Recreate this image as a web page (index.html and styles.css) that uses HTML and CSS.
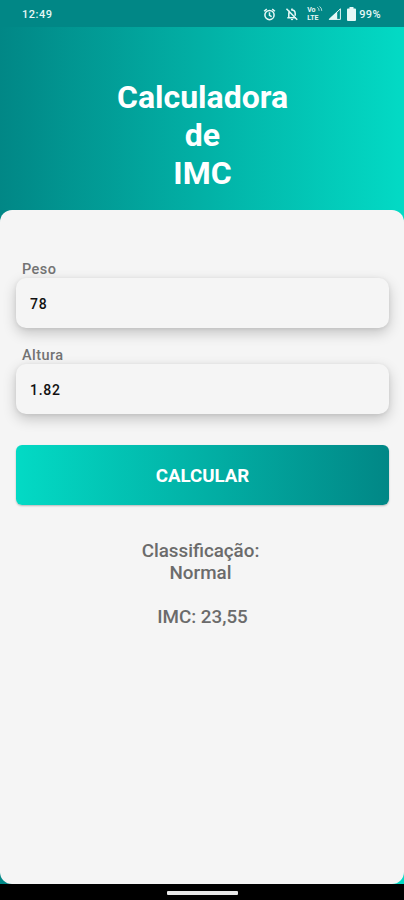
FILE: index.html
```html
<!DOCTYPE html>
<html lang="pt-BR">
<head>
<meta charset="UTF-8" />
<meta name="viewport" content="width=device-width, initial-scale=1" />
<title>Calculadora de IMC</title>
<link rel="stylesheet" href="styles.css">
</head>
<body>

<!-- Barra de status -->
<div class="status-bar">
  <span class="time">12:49</span>
  <div class="status-icons">
    <svg class="alarm" viewBox="0 0 24 24" fill="none" stroke="currentColor" stroke-width="2.8">
      <circle cx="12" cy="13" r="8.5" />
      <path d="M12 8v5.5l4 2.3M2 6l5-4M22 6l-5-4" />
    </svg>
    <svg class="bell" viewBox="0 0 24 24" fill="none" stroke="currentColor" stroke-width="2.6">
      <path d="M4 18.5h15M6.5 18v-7c0-2 .6-3.3 1.8-4.3M10.5 5.3c4-1 7 1.7 7 5.7v4M12 2.5v2.5M2.5 3l18.5 19" />
      <path d="M10 20.5h4a2 2 0 0 1-4 0z" fill="currentColor" stroke="none" />
    </svg>
    <div class="volte">
      <span>Vo<svg viewBox="0 0 8 8" fill="none" stroke="currentColor"><path d="M1 1.5q2.5 1.5 2.5 5M4 .5q3 2 3 6" /></svg></span>
      <span>LTE</span>
    </div>
    <svg class="signal" viewBox="0 0 13 12">
      <path d="M12.4 .8V11.4H1.2z" fill="none" stroke="currentColor" />
      <path d="M9.2 3.5V11.5H.5z" fill="currentColor" />
    </svg>
    <svg class="battery" viewBox="0 0 9 14" fill="currentColor">
      <path d="M2.5 0h4v1.5H8a1 1 0 0 1 1 1V13a1 1 0 0 1-1 1H1a1 1 0 0 1-1-1V2.5a1 1 0 0 1 1-1h1.5z" />
    </svg>
    <span class="percent">99%</span>
  </div>
</div>

<main>
  <h1>Calculadora<br>de<br>IMC</h1>

  <form class="card">
    <label for="peso">Peso</label>
    <input type="text" id="peso" value="78" />

    <label for="altura">Altura</label>
    <input type="text" id="altura" value="1.82" />

    <button type="button">CALCULAR</button>

    <div class="result">
      <p>Classificação:<br>Normal</p>
      <p class="imc">IMC: 23,55</p>
    </div>
  </form>
</main>

<!-- Barra de navegação -->
<div class="nav-bar">
  <div class="handle"></div>
</div>

</body>
</html>
```

FILE: styles.css
```css
* {
  box-sizing: border-box;
}
body {
  font-family: Roboto, "Liberation Sans", sans-serif;
  margin: 0;
  height: 900px;
  display: flex;
  flex-direction: column;
  overflow: hidden;
}
.status-bar {
  height: 27px;
  padding: 1px 23px 0 22px;
  display: flex;
  justify-content: space-between;
  align-items: center;
  background: #018786;
  color: #e6f8f6;
  font-size: 11px;
  font-weight: 500;
}
.time {
  letter-spacing: 0.5px;
}
.status-icons {
  display: flex;
  align-items: center;
}
.status-icons svg {
  display: block;
}
.alarm {
  width: 13px;
  height: 13px;
  margin-right: 9px;
}
.bell {
  width: 14px;
  height: 14px;
  margin-right: 8px;
}
.volte {
  width: 17px;
  margin-right: 4px;
  font-size: 7px;
  font-weight: 700;
  line-height: 8px;
}
.volte span {
  display: flex;
}
.volte svg {
  width: 7px;
  height: 6px;
}
.signal {
  width: 13px;
  height: 12px;
  margin-right: 6px;
}
.battery {
  width: 9px;
  height: 14px;
  margin-right: 3px;
}
.percent {
  letter-spacing: 0.4px;
}
main {
  flex: 1;
  display: flex;
  flex-direction: column;
  background: linear-gradient(to right, #018786, #03dac5);
}
h1 {
  margin: 51px 0 18px;
  padding-left: 1px;
  color: white;
  font-size: 32px;
  font-weight: 700;
  line-height: 38px;
  text-align: center;
}
.card {
  flex: 1;
  display: flex;
  flex-direction: column;
  padding: 50px 15px 0 16px;
  background: #f5f5f5;
  border-radius: 12px;
}
label {
  height: 18px;
  padding-left: 6px;
  color: #737373;
  font-size: 14.5px;
  font-weight: 500;
  letter-spacing: 0.45px;
  line-height: 20px;
}
input {
  height: 50px;
  margin: 0 0 18px;
  padding: 2px 14px 0;
  border: none;
  border-radius: 10px;
  background: #f5f5f5;
  box-shadow: 0 5px 14px rgba(0, 0, 0, 0.2), 0 1px 4px rgba(0, 0, 0, 0.08);
  color: #111;
  font-family: inherit;
  font-size: 14px;
  font-weight: 500;
  letter-spacing: 0.7px;
}
button {
  height: 60px;
  margin-top: 13px;
  padding: 2px 0 0;
  border: none;
  border-radius: 6px;
  background: linear-gradient(to left, #018786, #03dac5);
  box-shadow: 0 1px 2px rgba(0, 0, 0, 0.25);
  color: white;
  font-family: inherit;
  font-size: 18.7px;
  font-weight: 700;
}
.result {
  margin-top: 35px;
  padding-right: 4px;
  color: #6b6b6b;
  font-size: 18.8px;
  font-weight: 500;
  line-height: 22px;
  text-align: center;
}
.result p {
  margin: 0 0 22px;
}
.result .imc {
  padding-left: 4px;
}
.nav-bar {
  height: 16px;
  padding-top: 7px;
  background: black;
}
.handle {
  width: 71px;
  height: 4px;
  margin: 0 auto;
  border-radius: 1px;
  background: #e8e8e8;
}
```
